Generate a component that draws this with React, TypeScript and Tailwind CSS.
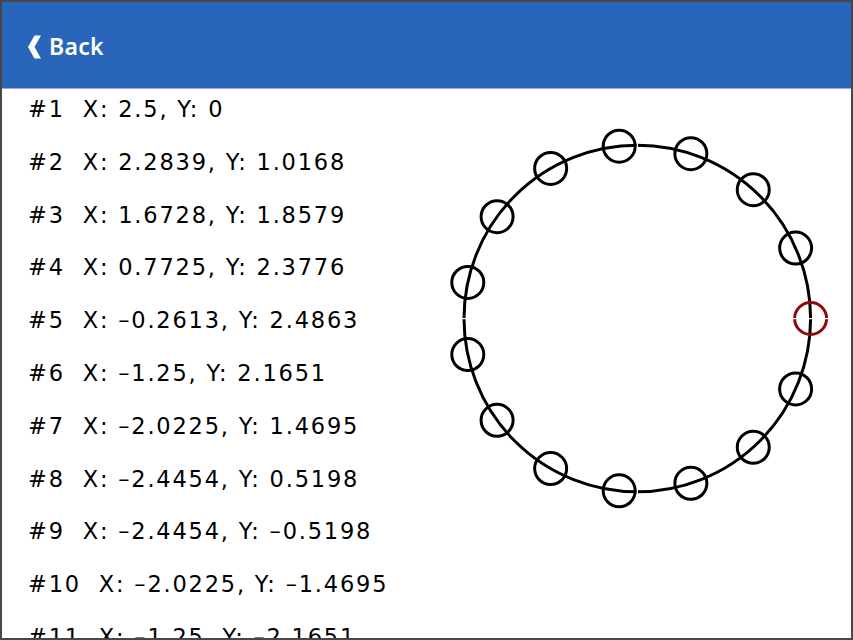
import React from "react";

const points = Array.from({ length: 15 }, (_, i) => {
  const a = (i * 2 * Math.PI) / 15;
  return { x: 2.5 * Math.cos(a), y: 2.5 * Math.sin(a) };
});

const fmt = (v: number) => {
  const r = Math.round(v * 10000) / 10000;
  const s = Math.abs(r) < 1e-9 ? "0" : String(Math.abs(r));
  return r < -1e-9 ? "\u2013" + s : s;
};

function Ring() {
  const cx = 207.3;
  const cy = 229.5;
  const R = 173.3;
  const r = 16;
  return (
    <svg width={421} height={548} viewBox="0 0 421 548" className="shrink-0">
      <circle cx={cx} cy={cy} r={R} fill="none" stroke="#000" strokeWidth={3} />
      {points.map((p, i) => {
        const x = cx + (p.x / 2.5) * R;
        const y = cy + (p.y / 2.5) * R;
        return (
          <circle
            key={i}
            cx={x}
            cy={y}
            r={r}
            fill="none"
            stroke={i === 0 ? "#8b0a0a" : "#000"}
            strokeWidth={3}
          />
        );
      })}
      {/* seams where the arcs meet */}
      <rect x={cx - 0.5} y={cy - R - 3} width={1.2} height={6} fill="#fff" />
      <rect x={cx - 0.5} y={cy + R - 3} width={1.2} height={6} fill="#fff" />
      <rect x={cx - R - 3} y={cy - 0.5} width={6} height={1.2} fill="#fff" />
      <rect x={cx + R - r - 3} y={cy - 0.5} width={2 * r + 6} height={1.2} fill="#fff" />
    </svg>
  );
}

export default function App() {
  return (
    <div className="w-[853px] h-[640px] border-2 border-[#474747] bg-white flex flex-col overflow-hidden">
      <header className="h-[87px] shrink-0 bg-[#2965bb] border-b border-[#8fb0dc] flex items-center pl-[24px] pt-[3px]">
        <div className="flex items-center gap-[7px] text-white">
          <svg width="16" height="24" viewBox="0 0 16 24">
            <polygon points="8.5,0.5 15,0.5 8.5,12 15,23.5 8.5,23.5 2,12" fill="#fff" />
          </svg>
          <span
            className="text-[23px] font-semibold leading-none tracking-[0.3px]"
            style={{ fontFamily: '"Noto Sans", "Open Sans", sans-serif' }}
          >
            Back
          </span>
        </div>
      </header>
      <main className="flex-1 flex flex-row overflow-hidden">
        <ul
          className="w-[428px] shrink-0 pl-[26px] pt-[2px] flex flex-col gap-[16.8px] text-[22.5px] leading-[36px] tracking-[1.8px] text-black"
          style={{ fontFamily: '"DejaVu Sans", "Noto Sans", sans-serif' }}
        >
          {points.slice(0, 11).map((p, i) => (
            <li key={i} className="whitespace-pre shrink-0">
              {`#${i + 1}  X: ${fmt(p.x)}, Y: ${fmt(p.y)}`}
            </li>
          ))}
        </ul>
        <Ring />
      </main>
    </div>
  );
}
